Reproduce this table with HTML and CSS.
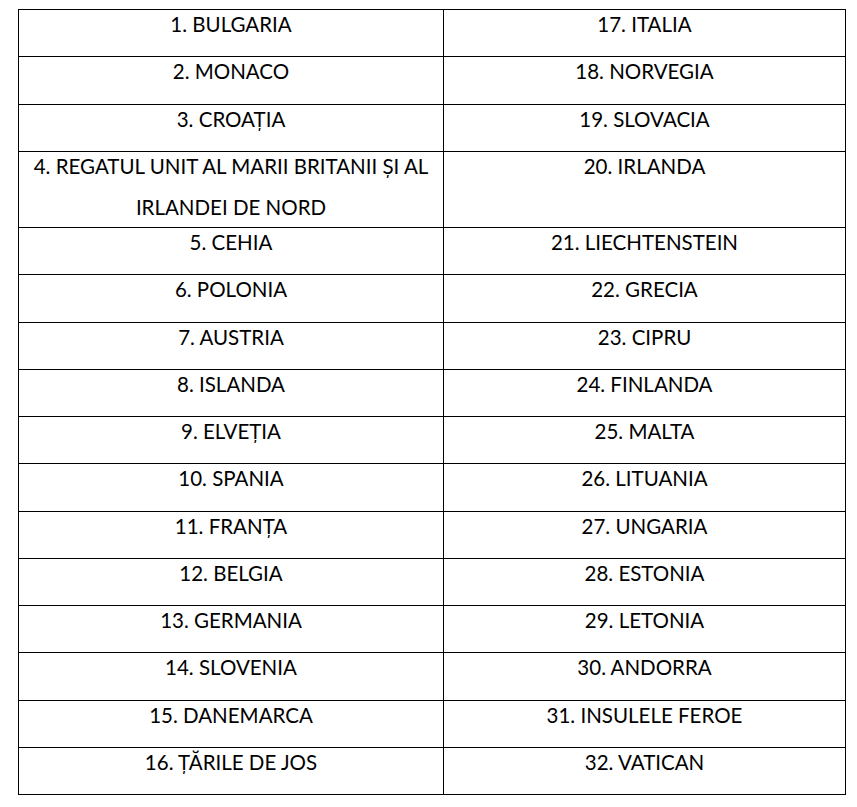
FILE: index.html
```html
<!DOCTYPE html>
<html lang="ro">
<head>
<meta charset="utf-8">
<title>Țări</title>
<link rel="stylesheet" href="styles.css">
</head>
<body>
<div class="grid">
  <div class="cell"><p>1. BULGARIA</p></div><div class="cell"><p>17. ITALIA</p></div>
  <div class="cell"><p>2. MONACO</p></div><div class="cell"><p>18. NORVEGIA</p></div>
  <div class="cell"><p>3. CROAȚIA</p></div><div class="cell"><p>19. SLOVACIA</p></div>
  <div class="cell"><p>4. REGATUL UNIT AL MARII BRITANII ȘI AL IRLANDEI DE NORD</p></div><div class="cell"><p>20. IRLANDA</p></div>
  <div class="cell"><p>5. CEHIA</p></div><div class="cell"><p>21. LIECHTENSTEIN</p></div>
  <div class="cell"><p>6. POLONIA</p></div><div class="cell"><p>22. GRECIA</p></div>
  <div class="cell"><p>7. AUSTRIA</p></div><div class="cell"><p>23. CIPRU</p></div>
  <div class="cell"><p>8. ISLANDA</p></div><div class="cell"><p>24. FINLANDA</p></div>
  <div class="cell"><p>9. ELVEȚIA</p></div><div class="cell"><p>25. MALTA</p></div>
  <div class="cell"><p>10. SPANIA</p></div><div class="cell"><p>26. LITUANIA</p></div>
  <div class="cell"><p>11. FRANȚA</p></div><div class="cell"><p>27. UNGARIA</p></div>
  <div class="cell"><p>12. BELGIA</p></div><div class="cell"><p>28. ESTONIA</p></div>
  <div class="cell"><p>13. GERMANIA</p></div><div class="cell"><p>29. LETONIA</p></div>
  <div class="cell"><p>14. SLOVENIA</p></div><div class="cell"><p>30. ANDORRA</p></div>
  <div class="cell"><p>15. DANEMARCA</p></div><div class="cell"><p>31. INSULELE FEROE</p></div>
  <div class="cell"><p>16. ȚĂRILE DE JOS</p></div><div class="cell"><p>32. VATICAN</p></div>
</div>
</body>
</html>
```
FILE: styles.css
```css
html, body {
  margin: 0;
  padding: 0;
  background: #fff;
}
body {
  font-family: Lato, "Liberation Sans", sans-serif;
  font-size: 20.5px;
  color: #000;
}
.grid {
  margin: 9px 0 0 18px;
  width: 828px;
  box-sizing: border-box;
  border-top: 1px solid #000;
  border-left: 1px solid #000;
  display: grid;
  grid-template-columns: 425px 402px;
  grid-template-rows: 47px 48px 47px 76px 47px 48px 47px 47px 47px 48px 47px 47px 47px 48px 47px 47px;
}
.cell {
  box-sizing: border-box;
  border-right: 1px solid #000;
  border-bottom: 1px solid #000;
  text-align: center;
  overflow: hidden;
}
.cell p {
  margin: -6px 0 0;
  line-height: 41px;
}
```
